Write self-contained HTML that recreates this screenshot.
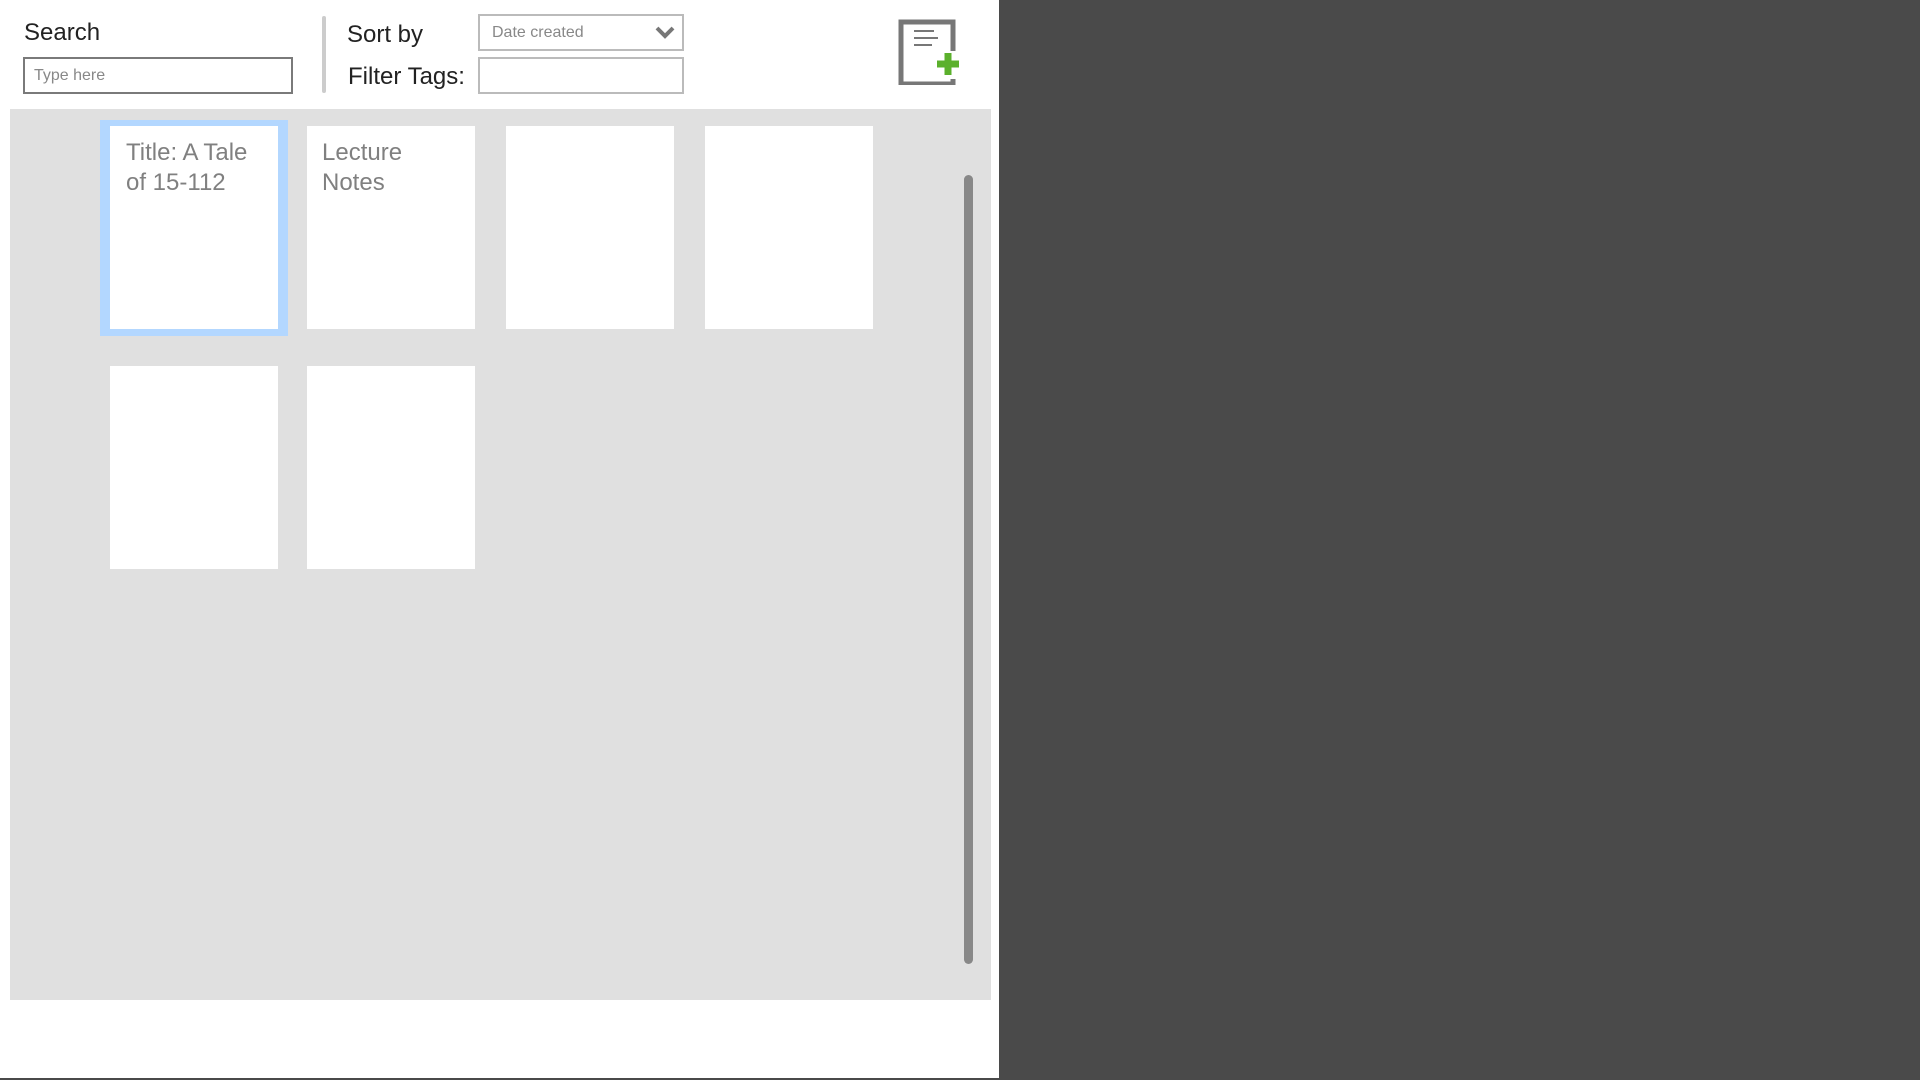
<!DOCTYPE html>
<html><head><style>
*{margin:0;padding:0;box-sizing:border-box}
body{width:1920px;height:1080px;background:#4a4a4a;position:relative;overflow:hidden;font-family:"Liberation Sans",sans-serif}
.p{position:absolute}
#white{left:0;top:0;width:999px;height:1078px;background:#fff}
#gray{left:10px;top:109px;width:981px;height:891px;background:#e0e0e0}
.lbl{font-size:24px;color:#222;line-height:30px}
.box{background:#fff}
.card{background:#fff;width:168px;height:203px}
.ct{position:absolute;left:16px;top:12px;font-size:24px;line-height:30px;color:#808080}
</style></head><body>
<div class="p" id="white"></div>
<div class="p lbl" style="left:24px;top:18px">Search</div>
<div class="p box" style="left:23px;top:57px;width:270px;height:37px;border:2px solid #7a7a7a"></div>
<div class="p" style="left:34px;top:67px;font-size:16px;color:#888">Type here</div>
<div class="p" style="left:322px;top:16px;width:4px;height:77px;background:#ccc;border-radius:2px"></div>
<div class="p lbl" style="left:347px;top:20px">Sort by</div>
<div class="p lbl" style="left:348px;top:62px">Filter Tags:</div>
<div class="p box" style="left:478px;top:14px;width:206px;height:37px;border:2px solid #bbb"></div>
<div class="p" style="left:492px;top:24px;font-size:16px;color:#888">Date created</div>
<svg class="p" style="left:655px;top:25px" width="20" height="14"><path d="M2 3 L10 11 L18 3" fill="none" stroke="#777" stroke-width="4"/></svg>
<div class="p box" style="left:478px;top:57px;width:206px;height:37px;border:2px solid #bbb"></div>
<svg class="p" style="left:898px;top:19px" width="64" height="66">
<path d="M3 3 H55 V65 H3 Z" fill="none" stroke="#777" stroke-width="5"/>
<rect x="44" y="32" width="20" height="28" fill="#fff"/>
<path d="M16 12 H36 M16 19 H40 M16 26 H34" stroke="#777" stroke-width="2"/>
<path d="M50 34 V56 M39 45 H61" stroke="#5bb02c" stroke-width="7"/>
</svg>
<div class="p" id="gray"></div>
<div class="p" style="left:100px;top:120px;width:188px;height:216px;background:#b3d7ff"></div>
<div class="p card" style="left:110px;top:126px"><div class="ct">Title: A Tale<br>of 15-112</div></div>
<div class="p card" style="left:307px;top:126px"><div class="ct" style="left:15px">Lecture<br>Notes</div></div>
<div class="p card" style="left:506px;top:126px"></div>
<div class="p card" style="left:705px;top:126px"></div>
<div class="p card" style="left:110px;top:366px"></div>
<div class="p card" style="left:307px;top:366px"></div>
<div class="p" style="left:964px;top:175px;width:9px;height:789px;background:#888;border-radius:5px"></div>
</body></html>
